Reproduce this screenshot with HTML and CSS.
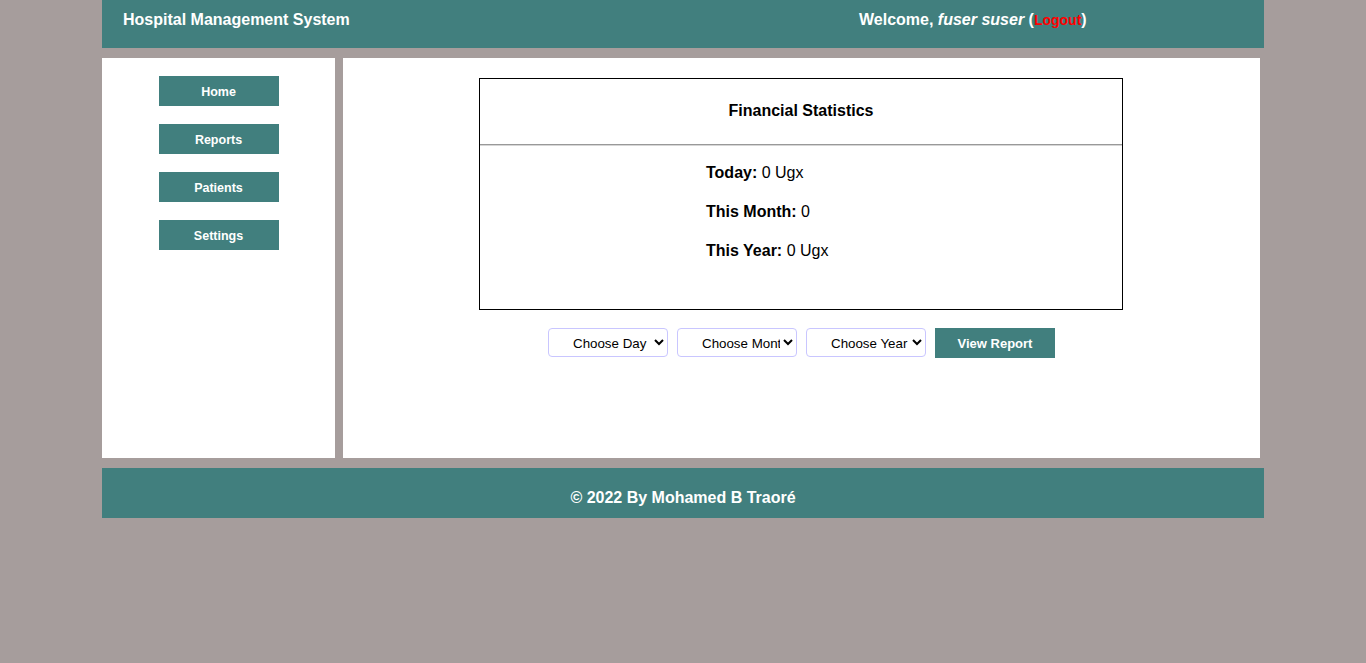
FILE: index.html
```html
<!DOCTYPE html>
<html>
<head>
<meta charset="utf-8">
<title>Hospital Management System</title>
<link rel="stylesheet" href="styles.css">
</head>
<body>
<div class="page">
  <header class="topbar">
    <div class="brand">Hospital Management System</div>
    <div class="welcome">Welcome, <i>fuser suser</i> (<a href="#" class="logout">Logout</a>)</div>
  </header>
  <div class="body">
    <nav class="sidebar">
      <a href="#" class="navbtn">Home</a>
      <a href="#" class="navbtn">Reports</a>
      <a href="#" class="navbtn">Patients</a>
      <a href="#" class="navbtn">Settings</a>
    </nav>
    <main class="main">
      <section class="stats">
        <h3 class="stats-title">Financial Statistics</h3>
        <div class="stats-rule"></div>
        <div class="stats-rows">
          <p class="row"><b>Today:</b> 0 Ugx</p>
          <p class="row"><b>This Month:</b> 0</p>
          <p class="row"><b>This Year:</b> 0 Ugx</p>
        </div>
      </section>
      <form class="filters">
        <select class="sel"><option>Choose Day</option></select>
        <select class="sel"><option>Choose Month</option></select>
        <select class="sel"><option>Choose Year</option></select>
        <button type="button" class="viewbtn">View Report</button>
      </form>
    </main>
  </div>
  <footer class="footer">© 2022 By Mohamed B Traoré</footer>
</div>
</body>
</html>
```
FILE: styles.css
```css
html, body {
  margin: 0;
  padding: 0;
  background: #a69d9c;
  font-family: "Liberation Sans", Arial, sans-serif;
}
.page {
  width: 1162px;
  margin: 0 auto;
}
.topbar {
  height: 48px;
  background: #417f7e;
  color: #fff;
  font-weight: bold;
  font-size: 16px;
  display: flex;
  align-items: center;
  padding: 0 0 9px 21px;
  box-sizing: border-box;
}
.brand {
  width: 736px;
}
.logout {
  color: #ff0000;
  text-decoration: none;
  font-size: 14px;
}
.body {
  display: flex;
  gap: 8px;
  margin-top: 10px;
  height: 400px;
}
.sidebar {
  width: 233px;
  background: #fff;
  display: flex;
  flex-direction: column;
  align-items: center;
  gap: 18px;
  padding-top: 18px;
  box-sizing: border-box;
}
.navbtn {
  width: 120px;
  height: 30px;
  background: #417f7e;
  color: #fff;
  font-size: 12.5px;
  font-weight: bold;
  text-decoration: none;
  display: flex;
  align-items: center;
  justify-content: center;
  padding-top: 2px;
  box-sizing: border-box;
}
.main {
  width: 917px;
  background: #fff;
  display: flex;
  flex-direction: column;
  align-items: center;
  padding-top: 20px;
  box-sizing: border-box;
}
.stats {
  width: 644px;
  height: 232px;
  border: 1px solid #000;
  box-sizing: border-box;
  margin-right: 1px;
}
.stats-title {
  margin: 0;
  height: 65px;
  padding-bottom: 2px;
  box-sizing: border-box;
  display: flex;
  align-items: center;
  justify-content: center;
  font-size: 16px;
  font-weight: bold;
  color: #000;
}
.stats-rule {
  height: 1px;
  background: #999;
  border-bottom: 1px solid #d6d6d6;
}
.stats-rows {
  padding: 18px 0 0 226px;
}
.row {
  margin: 0 0 21px;
  font-size: 16px;
  line-height: 18px;
  color: #000;
}
.filters {
  display: flex;
  gap: 9px;
  margin-top: 18px;
}
.sel {
  width: 120px;
  height: 29px;
  border: 1px solid #c9c6ff;
  border-radius: 4px;
  background: #fff;
  font-family: "Liberation Sans", Arial, sans-serif;
  font-size: 13.33px;
  color: #000;
  padding: 1px 0 0 20px;
  box-sizing: border-box;
}
.viewbtn {
  width: 120px;
  height: 30px;
  background: #417f7e;
  border: none;
  color: #fff;
  font-family: "Liberation Sans", Arial, sans-serif;
  font-size: 13px;
  font-weight: bold;
}
.footer {
  margin-top: 10px;
  height: 50px;
  background: #417f7e;
  color: #fff;
  font-size: 16px;
  font-weight: bold;
  display: flex;
  align-items: center;
  justify-content: center;
  padding-top: 10px;
  box-sizing: border-box;
}
```
